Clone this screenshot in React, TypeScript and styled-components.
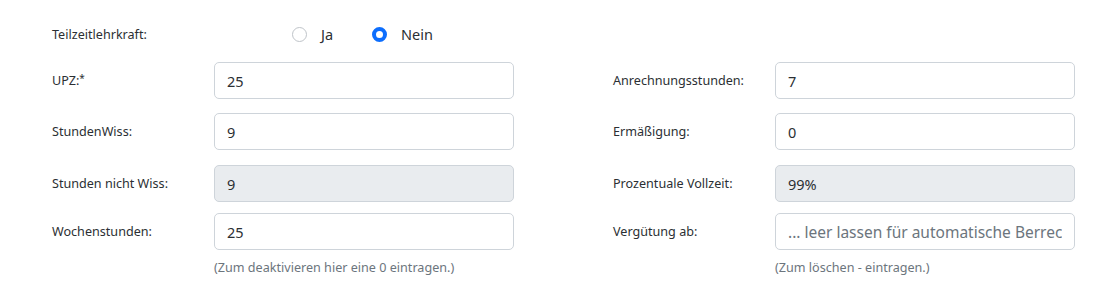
import React from "react";
import styled, { createGlobalStyle } from "styled-components";

const GlobalStyle = createGlobalStyle`
  html, body {
    margin: 0;
    padding: 0;
    background: #ffffff;
  }

  body {
    font-family: "Noto Sans", "Open Sans", sans-serif;
    color: #212529;
  }
`;

const Form = styled.form`
  padding: 22px 43px 0 52px;
  width: 1118px;
  box-sizing: border-box;
`;

const RadioRow = styled.div`
  display: flex;
  align-items: center;
  height: 24px;
  margin-bottom: 16px;
`;

const Grid = styled.div`
  display: grid;
  grid-template-columns: 162px 300px 99px 162px 300px;
`;

const Row = styled.div<{ $gap: number }>`
  display: contents;

  & > * {
    margin-bottom: ${(p) => p.$gap}px;
  }
`;

const Label = styled.label<{ $width?: number }>`
  display: flex;
  align-items: center;
  height: 37px;
  font-size: 12.6px;
  color: #2b2f33;
  width: ${(p) => (p.$width ? `${p.$width}px` : "auto")};

  sup {
    font-size: 10px;
    vertical-align: top;
    position: relative;
    top: -3px;
  }
`;

const Field = styled.div`
  display: flex;
  flex-direction: column;
`;

const Input = styled.input<{ $disabled?: boolean }>`
  box-sizing: border-box;
  width: 300px;
  height: 37px;
  padding: 0 12px;
  border: 1px solid #ced4da;
  border-radius: 5px;
  font-family: "Noto Sans", "Open Sans", sans-serif;
  font-size: 14.5px;
  color: #2b2f33;
  background: ${(p) => (p.$disabled ? "#e9ecef" : "#ffffff")};
  outline: none;

  &::placeholder {
    color: #6c757d;
    font-size: 15.5px;
  }
`;

const Help = styled.div`
  margin-top: 9px;
  font-size: 12.6px;
  color: #6c757d;
`;

const Spacer = styled.div``;

const RadioGroup = styled.div`
  display: flex;
  align-items: center;
  gap: 39px;
`;

const RadioOption = styled.label`
  display: flex;
  align-items: center;
  gap: 14px;
  font-size: 14.5px;
  color: #2b2f33;
`;

const RadioDot = styled.span<{ $checked?: boolean }>`
  box-sizing: border-box;
  width: 15px;
  height: 15px;
  border-radius: 50%;
  border: ${(p) => (p.$checked ? "4px solid #0d6efd" : "1px solid #bfc4c9")};
  background: #ffffff;
`;

export default function App() {
  return (
    <>
      <GlobalStyle />
      <Form>
        <RadioRow>
          <Label $width={240} as="span">
            Teilzeitlehrkraft:
          </Label>
          <RadioGroup>
            <RadioOption>
              <RadioDot />
              Ja
            </RadioOption>
            <RadioOption>
              <RadioDot $checked />
              Nein
            </RadioOption>
          </RadioGroup>
        </RadioRow>

        <Grid>
          <Row $gap={14}>
            <Label>
              UPZ:<sup>*</sup>
            </Label>
            <Input defaultValue="25" />
            <Spacer />
            <Label>Anrechnungsstunden:</Label>
            <Input defaultValue="7" />
          </Row>
          <Row $gap={15}>
            <Label>StundenWiss:</Label>
            <Input defaultValue="9" />
            <Spacer />
            <Label>Ermäßigung:</Label>
            <Input defaultValue="0" />
          </Row>
          <Row $gap={11}>
            <Label>Stunden nicht Wiss:</Label>
            <Input $disabled readOnly defaultValue="9" />
            <Spacer />
            <Label>Prozentuale Vollzeit:</Label>
            <Input $disabled readOnly defaultValue="99%" />
          </Row>
          <Row $gap={0}>
            <Label>Wochenstunden:</Label>
            <Field>
              <Input defaultValue="25" />
              <Help>(Zum deaktivieren hier eine 0 eintragen.)</Help>
            </Field>
            <Spacer />
            <Label>Vergütung ab:</Label>
            <Field>
              <Input placeholder="... leer lassen für automatische Berrechnung" />
              <Help>(Zum löschen - eintragen.)</Help>
            </Field>
          </Row>
        </Grid>
      </Form>
    </>
  );
}
